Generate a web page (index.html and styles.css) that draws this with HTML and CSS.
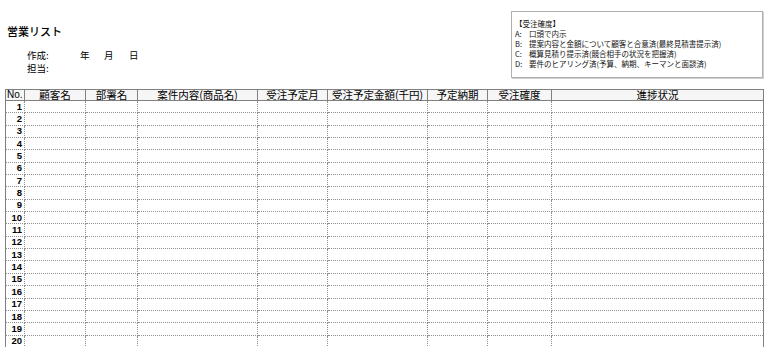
FILE: index.html
```
<!DOCTYPE html>
<html lang="ja">
<head>
<meta charset="utf-8">
<title>営業リスト</title>
<link rel="stylesheet" href="styles.css">
</head>
<body>
<div class="page">
  <div class="top">
    <div class="head-left">
      <h1 class="title">営業リスト</h1>
      <div class="meta">
        <div class="meta-row"><span class="label">作成:</span><span class="unit year">年</span><span class="unit month">月</span><span class="unit">日</span></div>
        <div class="meta-row"><span class="label">担当:</span></div>
      </div>
    </div>
    <div class="legend">
      <div class="legend-line">【受注確度】</div>
      <div class="legend-line"><span class="key">A:</span>口頭で内示</div>
      <div class="legend-line"><span class="key">B:</span>提案内容と金額について顧客と合意済(最終見積書提示済)</div>
      <div class="legend-line"><span class="key">C:</span>概算見積り提示済(競合相手の状況を把握済)</div>
      <div class="legend-line"><span class="key">D:</span>要件のヒアリング済(予算、納期、キーマンと面談済)</div>
    </div>
  </div>
  <table class="list">
    <colgroup>
      <col class="c-no"><col class="c-cust"><col class="c-dept"><col class="c-item"><col class="c-month"><col class="c-amount"><col class="c-due"><col class="c-prob"><col class="c-status">
    </colgroup>
    <thead>
      <tr><th class="no">No.</th><th>顧客名</th><th>部署名</th><th>案件内容(商品名)</th><th>受注予定月</th><th>受注予定金額(千円)</th><th>予定納期</th><th>受注確度</th><th>進捗状況</th></tr>
    </thead>
    <tbody>
      <tr><td class="num">1</td><td></td><td></td><td></td><td></td><td></td><td></td><td></td><td></td></tr>
      <tr><td class="num">2</td><td></td><td></td><td></td><td></td><td></td><td></td><td></td><td></td></tr>
      <tr><td class="num">3</td><td></td><td></td><td></td><td></td><td></td><td></td><td></td><td></td></tr>
      <tr><td class="num">4</td><td></td><td></td><td></td><td></td><td></td><td></td><td></td><td></td></tr>
      <tr><td class="num">5</td><td></td><td></td><td></td><td></td><td></td><td></td><td></td><td></td></tr>
      <tr><td class="num">6</td><td></td><td></td><td></td><td></td><td></td><td></td><td></td><td></td></tr>
      <tr><td class="num">7</td><td></td><td></td><td></td><td></td><td></td><td></td><td></td><td></td></tr>
      <tr><td class="num">8</td><td></td><td></td><td></td><td></td><td></td><td></td><td></td><td></td></tr>
      <tr><td class="num">9</td><td></td><td></td><td></td><td></td><td></td><td></td><td></td><td></td></tr>
      <tr><td class="num">10</td><td></td><td></td><td></td><td></td><td></td><td></td><td></td><td></td></tr>
      <tr><td class="num">11</td><td></td><td></td><td></td><td></td><td></td><td></td><td></td><td></td></tr>
      <tr><td class="num">12</td><td></td><td></td><td></td><td></td><td></td><td></td><td></td><td></td></tr>
      <tr><td class="num">13</td><td></td><td></td><td></td><td></td><td></td><td></td><td></td><td></td></tr>
      <tr><td class="num">14</td><td></td><td></td><td></td><td></td><td></td><td></td><td></td><td></td></tr>
      <tr><td class="num">15</td><td></td><td></td><td></td><td></td><td></td><td></td><td></td><td></td></tr>
      <tr><td class="num">16</td><td></td><td></td><td></td><td></td><td></td><td></td><td></td><td></td></tr>
      <tr><td class="num">17</td><td></td><td></td><td></td><td></td><td></td><td></td><td></td><td></td></tr>
      <tr><td class="num">18</td><td></td><td></td><td></td><td></td><td></td><td></td><td></td><td></td></tr>
      <tr><td class="num">19</td><td></td><td></td><td></td><td></td><td></td><td></td><td></td><td></td></tr>
      <tr><td class="num">20</td><td></td><td></td><td></td><td></td><td></td><td></td><td></td><td></td></tr>
    </tbody>
  </table>
</div>
</body>
</html>
```
FILE: styles.css
```
html, body {
  margin: 0;
  padding: 0;
  background: #fff;
}
body {
  font-family: "Liberation Sans", "Noto Sans CJK JP", sans-serif;
  color: #000;
}
.page {
  padding: 0 5px;
  width: 758px;
}
.top {
  display: flex;
  height: 89px;
}
.head-left {
  padding-left: 2px;
  padding-top: 25px;
}
.title {
  margin: 0;
  font-size: 11px;
  line-height: 12px;
  font-weight: 500;
  font-family: "Noto Sans CJK JP", sans-serif;
}
.meta {
  padding-top: 12px;
  padding-left: 20px;
  font-family: "Noto Sans CJK JP", sans-serif;
  font-size: 9.5px;
}
.meta-row {
  display: flex;
  height: 13px;
  line-height: 13px;
}
.label {
  width: 53px;
}
.unit {
  width: 24px;
}
.unit.month {
  width: 25px;
}
.legend {
  margin-left: auto;
  margin-top: 11px;
  width: 252px;
  height: 67px;
  box-sizing: border-box;
  border: 1px solid #b0b0b0;
  box-shadow: 1px 1px 0 #d0d0d0;
  padding: 7px 0 0 3px;
  font-family: "Noto Sans CJK JP", sans-serif;
  font-size: 7.5px;
  line-height: 10px;
  white-space: nowrap;
  color: #111;
}
.key {
  display: inline-block;
  width: 14px;
}
.list {
  width: 758px;
  table-layout: fixed;
  border-collapse: collapse;
  font-family: "Noto Sans CJK JP", sans-serif;
}
.c-no { width: 19px; }
.c-cust { width: 61px; }
.c-dept { width: 52px; }
.c-item { width: 120px; }
.c-month { width: 70px; }
.c-amount { width: 100px; }
.c-due { width: 60px; }
.c-prob { width: 64px; }
.c-status { width: 212px; }
.list th {
  height: 10px;
  padding: 0;
  font-size: 10.5px;
  line-height: 10px;
  font-weight: 400;
  text-align: center;
  border: 1px solid #808080;
  background: #f6f6f6;
  white-space: nowrap;
}
.list th.no {
  font-family: "Liberation Sans", sans-serif;
  font-size: 10px;
  text-align: left;
  padding-left: 1px;
}
.list td {
  height: 11.35px;
  padding: 0;
  border-left: 1px dotted #909090;
  border-right: 1px dotted #909090;
  border-bottom: 1px dotted #909090;
}
.list td:first-child {
  border-left: 1px solid #808080;
}
.list td:last-child {
  border-right: 1px solid #808080;
}
.list td.num {
  font-family: "Liberation Sans", sans-serif;
  font-size: 9.5px;
  line-height: 10px;
  text-align: right;
  padding-right: 2px;
  font-weight: 700;
}
```
